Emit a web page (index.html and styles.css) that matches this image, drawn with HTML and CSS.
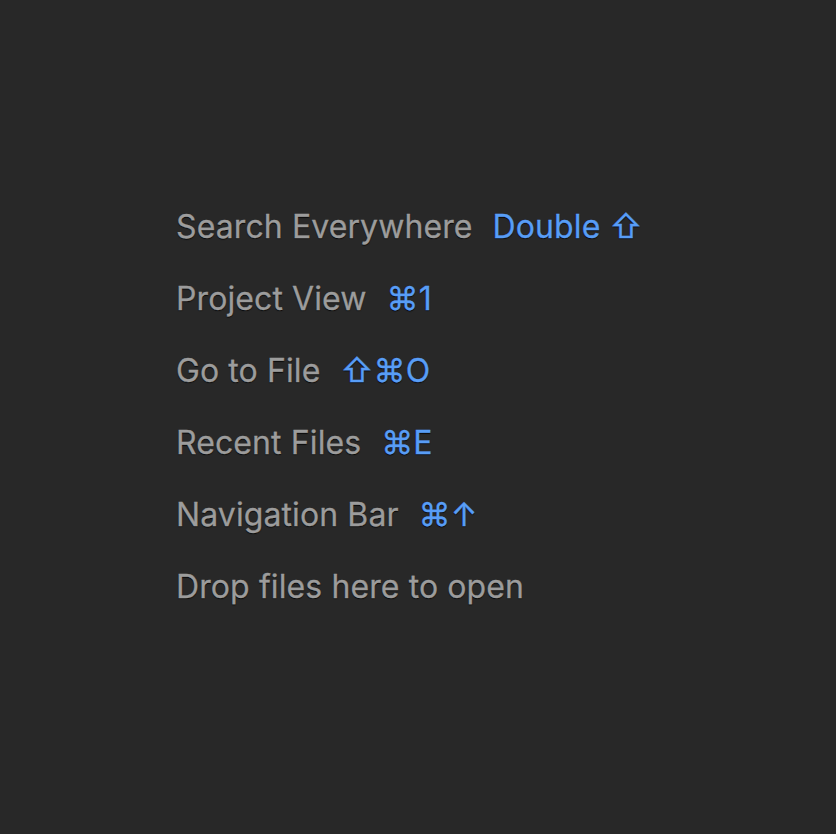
FILE: index.html
```html
<!DOCTYPE html>
<html>
<head>
<meta charset="utf-8">
<link rel="stylesheet" href="styles.css">
</head>
<body>
<div class="editor">
  <ul class="hints">
    <li class="hint"><span class="label">Search Everywhere</span><span class="key">Double ⇧</span></li>
    <li class="hint"><span class="label">Project View</span><span class="key">⌘1</span></li>
    <li class="hint"><span class="label">Go to File</span><span class="key">⇧⌘O</span></li>
    <li class="hint"><span class="label">Recent Files</span><span class="key">⌘E</span></li>
    <li class="hint"><span class="label">Navigation Bar</span><span class="key">⌘↑</span></li>
    <li class="hint"><span class="label">Drop files here to open</span></li>
  </ul>
</div>
</body>
</html>
```
FILE: styles.css
```css
html, body {
  margin: 0;
  padding: 0;
  background: #282828;
}
.editor {
  width: 836px;
  height: 834px;
  box-sizing: border-box;
  padding: 209px 0 0 176px;
  font-family: Inter, "Open Sans", "DejaVu Sans", sans-serif;
  font-size: 32px;
  letter-spacing: 0.1px;
}
.hints {
  list-style: none;
  margin: 0;
  padding: 0;
  display: flex;
  flex-direction: column;
  gap: 36px;
}
.hint {
  display: flex;
  gap: 20px;
  line-height: 36px;
  text-shadow: 0 1px 1px rgba(0, 0, 0, 0.85);
  -webkit-text-stroke: 0.3px currentColor;
}
.label {
  color: #9c9c9c;
}
.key {
  color: #589df6;
}
```
